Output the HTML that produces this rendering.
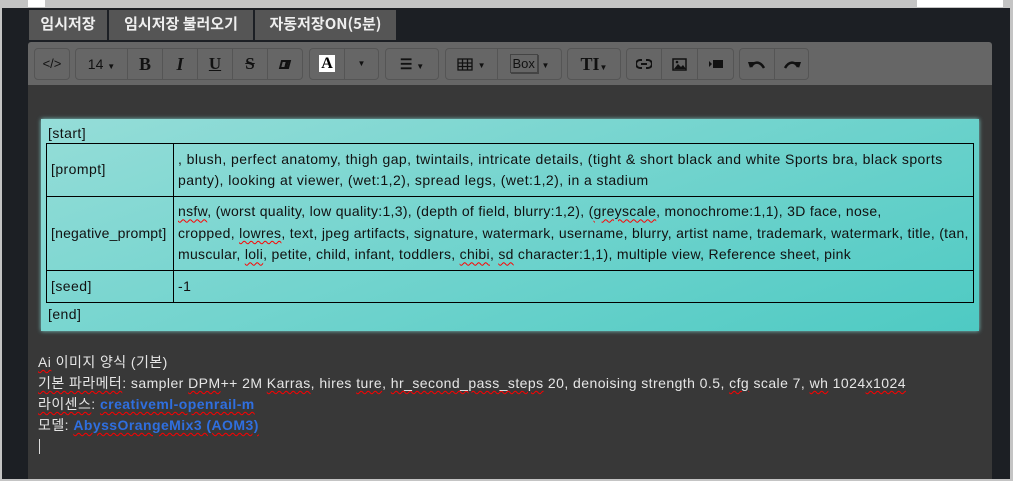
<!DOCTYPE html>
<html><head><meta charset="utf-8"><style>
*{box-sizing:border-box;margin:0;padding:0}
body{width:1013px;height:481px;background:#c4c4c4;position:relative;overflow:hidden;font-family:"Liberation Sans","Noto Sans CJK KR",sans-serif}
.abs{position:absolute}
.tab{position:absolute;top:10px;height:30px;background:#555;color:#eee;font-size:15px;font-weight:bold;line-height:28px;text-align:center;font-family:"Noto Sans CJK KR","Liberation Sans",sans-serif}
.grp{position:absolute;top:48px;height:32px;border:1px solid #555;border-radius:4px;background:#666}
.b{position:absolute;top:0;height:30px;border-right:1px solid #555;color:#111;text-align:center;line-height:30px;font-size:15px}
.b:last-child{border-right:none}
td{border:1px solid #000;padding:3px 4px;font-size:14px;line-height:21.5px;color:#111;vertical-align:middle;letter-spacing:0.44px;white-space:nowrap;overflow:hidden}
.u{text-decoration:underline wavy red;text-decoration-thickness:1px;text-underline-offset:2px}
.tx{position:absolute;left:38px;font-size:14px;color:#e6e6e6;line-height:21px;letter-spacing:0.44px;white-space:nowrap;font-family:"Liberation Sans","Noto Sans CJK KR",sans-serif}
a{color:#2f6fe0;font-weight:bold;text-decoration:none}
</style></head><body>
<div class="abs" style="left:2px;top:8px;width:1008px;height:471px;background:#1c1f24"></div>
<div class="abs" style="left:28px;top:0;width:17px;height:7px;background:#fff"></div>
<div class="abs" style="left:917px;top:0;width:86px;height:7px;background:#fff"></div>
<div class="tab" style="left:29px;width:78px">임시저장</div>
<div class="tab" style="left:109px;width:144px">임시저장 불러오기</div>
<div class="tab" style="left:255px;width:141px">자동저장ON(5분)</div>
<div class="abs" style="left:28px;top:42px;width:964px;height:43px;background:#666;border-radius:3px 3px 0 0"></div>
<div class="abs" style="left:28px;top:85px;width:964px;height:394px;background:#383838"></div>

<div class="grp" style="left:34px;width:36px"><div class="b" style="left:0;width:34px;font-size:13px">&lt;/&gt;</div></div>
<div class="grp" style="left:75px;width:228px">
<div class="b" style="left:0;width:52px;font-size:14px">14 <span style="font-size:8px">▼</span></div>
<div class="b" style="left:52px;width:35px;font-family:'Liberation Serif';font-weight:bold;font-size:18px">B</div>
<div class="b" style="left:87px;width:35px;font-family:'Liberation Serif';font-style:italic;font-weight:bold;font-size:18px">I</div>
<div class="b" style="left:122px;width:35px;font-family:'Liberation Serif';text-decoration:underline;font-weight:bold;font-size:17px">U</div>
<div class="b" style="left:157px;width:35px;font-family:'Liberation Serif';text-decoration:line-through;font-weight:bold;font-size:17px">S</div>
<div class="b" style="left:192px;width:34px"><span style="display:inline-block;width:10px;height:9px;border:2px solid #111;background:linear-gradient(90deg,#666 50%,#111 50%);transform:skewX(-15deg);vertical-align:middle"></span></div>
</div>
<div class="grp" style="left:309px;width:70px">
<div class="b" style="left:0;width:35px"><span style="background:#fff;color:#000;font-family:'Liberation Serif';font-weight:bold;font-size:16px;padding:0 2px">A</span></div>
<div class="b" style="left:35px;width:33px;font-size:8px">▼</div></div>
<div class="grp" style="left:385px;width:54px"><div class="b" style="left:0;width:52px;font-size:14px;font-weight:bold">☰ <span style="font-size:8px">▼</span></div></div>
<div class="grp" style="left:445px;width:117px">
<div class="b" style="left:0;width:52px"><svg width="16" height="13" viewBox="0 0 16 13" style="vertical-align:middle"><path d="M1 1h14v11H1zM1 5h14M1 8.5h14M5.5 1v11M10.5 1v11" stroke="#111" stroke-width="1.3" fill="none"/></svg> <span style="font-size:8px">▼</span></div>
<div class="b" style="left:52px;width:63px;font-size:13px"><span style="border:1px solid #444;padding:1px 2px;background:#666;box-shadow:1px 1px 0 #444">Box</span> <span style="font-size:8px">▼</span></div></div>
<div class="grp" style="left:567px;width:54px"><div class="b" style="left:0;width:52px;font-family:'Liberation Serif';font-weight:bold;font-size:18px">TI<span style="font-size:8px">▼</span></div></div>
<div class="grp" style="left:626px;width:108px">
<div class="b" style="left:0;width:35px"><svg width="16" height="10" viewBox="0 0 16 10" style="vertical-align:middle"><path d="M6 1H4a4 4 0 0 0 0 8h2M10 1h2a4 4 0 0 1 0 8h-2M5 5h6" stroke="#111" stroke-width="2" fill="none"/></svg></div>
<div class="b" style="left:35px;width:36px"><svg width="15" height="13" viewBox="0 0 15 13" style="vertical-align:middle"><rect x="1" y="1" width="13" height="11" fill="none" stroke="#111" stroke-width="1.5"/><path d="M2 11l4-5 3 3 2-2 3 4z" fill="#111"/><circle cx="5" cy="4" r="1.3" fill="#111"/></svg></div>
<div class="b" style="left:71px;width:35px"><svg width="14" height="10" viewBox="0 0 14 10" style="vertical-align:middle"><path d="M0 2l3 3-3 3z" fill="#111"/><rect x="4" y="1" width="10" height="8" fill="#111"/></svg></div></div>
<div class="grp" style="left:739px;width:70px">
<div class="b" style="left:0;width:35px"><svg width="18" height="10" viewBox="0 0 18 10" style="vertical-align:middle"><path d="M3 8c3-6 9-6 13 1" stroke="#111" stroke-width="2.5" fill="none"/><path d="M0 3l6 0-4 6z" fill="#111"/></svg></div>
<div class="b" style="left:35px;width:33px"><svg width="18" height="10" viewBox="0 0 18 10" style="vertical-align:middle"><path d="M15 8C12 2 6 2 2 9" stroke="#111" stroke-width="2.5" fill="none"/><path d="M18 3l-6 0 4 6z" fill="#111"/></svg></div></div>

<div class="abs" style="left:41px;top:119px;width:938px;height:212px;background:linear-gradient(160deg,#95ddd8,#4ecac3);box-shadow:0 0 4px #7fd0cc;padding:4px 5px;font-size:14px;color:#111">
<div style="line-height:20px;padding-left:2px;letter-spacing:0.44px">[start]</div>
<table style="border-collapse:collapse;width:928px;table-layout:fixed">
<colgroup><col style="width:127px"><col></colgroup>
<tr style="height:53px"><td>[prompt]</td><td>, blush, perfect anatomy, thigh gap, twintails, intricate details, (tight &amp; short black and white Sports bra, black sports<br>panty), looking at viewer, (wet:1,2), spread legs, (wet:1,2), in a stadium</td></tr>
<tr style="height:74px"><td style="letter-spacing:0.2px">[negative_prompt]</td><td style="letter-spacing:0.3px"><span class="u">nsfw</span>, (worst quality, low quality:1,3), (depth of field, blurry:1,2), (<span class="u">greyscale</span>, monochrome:1,1), 3D face, nose,<br>cropped, <span class="u">lowres</span>, text, jpeg artifacts, signature, watermark, username, blurry, artist name, trademark, watermark, title, (tan,<br>muscular, <span class="u">loli</span>, petite, child, infant, toddlers, <span class="u">chibi</span>, <span class="u">sd</span> character:1,1), multiple view, Reference sheet, pink</td></tr>
<tr style="height:32px"><td>[seed]</td><td>-1</td></tr>
</table>
<div style="line-height:20px;padding-left:2px;margin-top:1px;letter-spacing:0.44px">[end]</div>
</div>
<div class="tx" style="top:352px"><span class="u">Ai</span> 이미지 양식 (기본)</div>
<div class="tx" style="top:373px"><span class="u">기본 파라메터</span>: sampler <span class="u">DPM</span>++ 2M <span class="u">Karras</span>, hires <span class="u">ture</span>, <span class="u">hr_second_pass_steps</span> 20, denoising strength 0.5, <span class="u">cfg</span> scale 7, <span class="u">wh</span> 1024<span class="u">x1024</span></div>
<div class="tx" style="top:394px"><span class="u">라이센스</span>: <a class="u">creativeml-openrail-m</a></div>
<div class="tx" style="top:415px">모델: <a class="u">AbyssOrangeMix3 (AOM3)</a></div>
<div class="abs" style="left:39px;top:439px;width:1px;height:15px;background:#ddd"></div>
</body></html>
